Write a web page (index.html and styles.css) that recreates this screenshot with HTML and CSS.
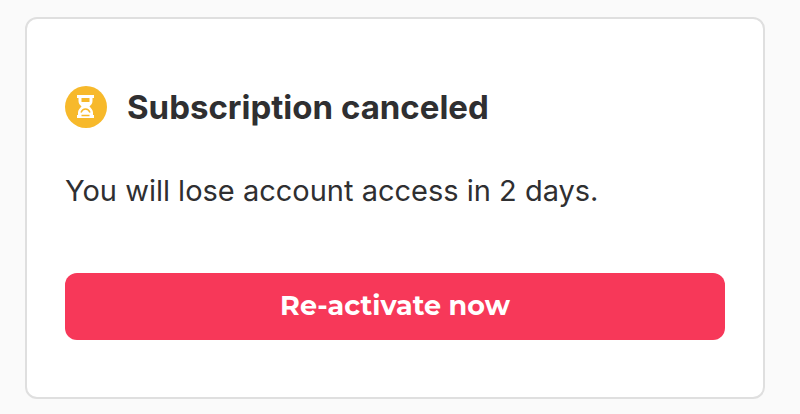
FILE: index.html
```html
<!DOCTYPE html>
<html lang="en">
<head>
    <meta charset="UTF-8">
    <meta name="viewport" content="width=device-width, initial-scale=1.0">
    <title>Subscription canceled</title>
    <link rel="stylesheet" href="styles.css">
</head>
<body>
    <main class="card">
        <div class="card-header">
            <svg class="status-icon" viewBox="0 0 42 42" aria-hidden="true">
                <circle cx="21" cy="21" r="21" fill="#f7b92b"/>
                <path fill="#fff" d="M12 9h17v3h-1.500v3c0 2.500-1.500 4-3 5.500c1.500 1.500 3.500 3.500 3.500 6v2.500h1v3H12v-3h1v-2.500c0-2.500 2-4.500 3.500-6c-1.500-1.500-3-3-3-5.500v-3H12z"/>
                <path fill="#f7b92b" d="M16.500 12h8v4h-8z"/>
                <path fill="none" stroke="#f7b92b" stroke-width="1.500" d="M16 26.500c1-2.500 2.500-3.500 4.500-3.500s3.500 1 4.500 3.500M16.500 29.500h8"/>
            </svg>
            <h1>Subscription canceled</h1>
        </div>
        <p class="message">You will lose account access in 2 days.</p>
        <button type="button" class="btn">Re-activate now</button>
    </main>
</body>
</html>
```
FILE: styles.css
```css
:root {
    --bg-color: #fafafa;
    --card-color: #fff;
    --border-color: #dfdfdf;
    --text-color: #2f2f31;
    --main-color: #f73859;
}

* {
    box-sizing: border-box;
}

body {
    margin: 0;
    padding: 17px 35px 15px 25px;
    font-family: Inter, "Liberation Sans", sans-serif;
    background-color: var(--bg-color);
    color: var(--text-color);
}

.card {
    padding: 67px 38px 57px;
    background-color: var(--card-color);
    border: 2px solid var(--border-color);
    border-radius: 12px;
}

.card-header {
    display: flex;
    align-items: center;
    gap: 20px;
}

.status-icon {
    width: 42px;
    height: 42px;
    flex-shrink: 0;
}

h1 {
    margin: 0;
    font-size: 33px;
    line-height: 40px;
    font-weight: 700;
}

.message {
    margin: 43px 0 62px;
    font-size: 29px;
    line-height: 40px;
}

.btn {
    display: block;
    width: 100%;
    padding: 15px 16px 17px;
    border: none;
    border-radius: 12px;
    background-color: var(--main-color);
    color: #fff;
    font-family: Montserrat, Inter, sans-serif;
    font-size: 27px;
    line-height: 35px;
    font-weight: 700;
    cursor: pointer;
}
```
